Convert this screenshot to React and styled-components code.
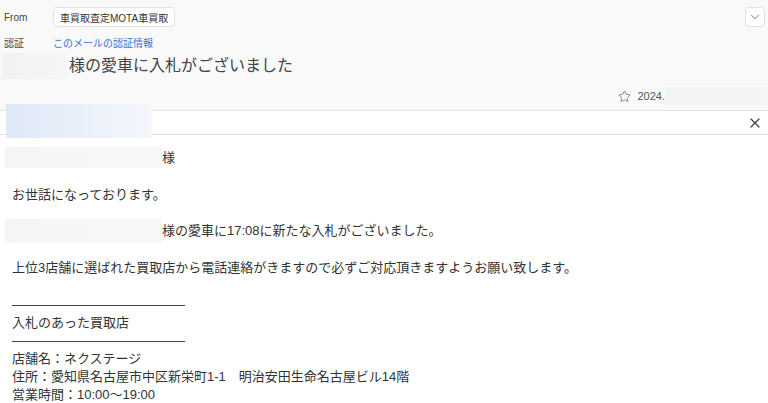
import React from "react";
import styled, { createGlobalStyle } from "styled-components";
import { Star, X, ChevronDown } from "lucide-react";

const Global = createGlobalStyle`
  html, body { margin: 0; padding: 0; background: #fff; }
  body {
    font-family: "Liberation Sans", Arial, "Noto Sans CJK JP", sans-serif;
    color: #333;
    width: 768px;
    height: 403px;
    overflow: hidden;
  }
`;

const Header = styled.header`
  background: #f9f9fa;
  border-bottom: 1px solid #e3e3e5;
  height: 111px;
  box-sizing: border-box;
  padding: 7px 3px 0 4px;
`;

const MetaRow = styled.div`
  display: flex;
  align-items: center;
  height: ${(p) => p.$h || 18}px;
  margin-bottom: ${(p) => p.$mb || 0}px;
  font-size: 10px;
  color: #444;
`;

const Label = styled.span`
  width: 49px;
  flex: none;
`;

const Chip = styled.span`
  display: inline-flex;
  align-items: center;
  height: 20px;
  box-sizing: border-box;
  padding: 0 6px;
  background: #fff;
  border: 1px solid #e2e2e4;
  border-radius: 4px;
  color: #333;
  font-size: 10px;
`;

const Link = styled.a`
  color: #3a74cf;
  text-decoration: none;
`;

const Spacer = styled.div`
  flex: 1;
`;

const IconButton = styled.button`
  width: 20px;
  height: 20px;
  padding: 0;
  display: flex;
  align-items: center;
  justify-content: center;
  background: #fff;
  border: 1px solid #e2e2e4;
  border-radius: 4px;
  color: #666;
`;

const SubjectRow = styled.div`
  display: flex;
  align-items: center;
  margin: 2px 0 0 -2px;
  height: 26px;
`;

const Redact = styled.span`
  display: inline-block;
  flex: none;
  width: ${(p) => p.$w}px;
  height: ${(p) => p.$h}px;
  background: ${(p) => p.$bg || "linear-gradient(90deg, #f1f1f3, #f6f6f7)"};
`;

const Subject = styled.h1`
  margin: 0 0 0 1px;
  font-size: 16px;
  font-weight: 400;
  color: #444;
  line-height: 26px;
`;

const DateRow = styled.div`
  display: flex;
  align-items: center;
  justify-content: flex-end;
  margin: 7px -3px 0 0;
  height: 20px;
  font-size: 11px;
  color: #555;
  gap: 6px;
`;

const DateText = styled.span`
  display: flex;
  align-items: center;
`;

const TabRow = styled.div`
  position: relative;
  height: 23px;
  border-bottom: 1px solid #e3e3e5;
  display: flex;
  align-items: center;
  justify-content: flex-end;
  padding-right: 5px;
  color: #444;
`;

const TabRedact = styled.span`
  position: absolute;
  left: 6px;
  top: -7px;
  width: 146px;
  height: 34px;
  background: linear-gradient(90deg, #dfe8f8, #eef3fb 70%, #f4f7fc);
`;

const Body = styled.main`
  padding: 13px 0 0 12px;
  font-size: 13px;
  line-height: 19px;
  color: #333;
`;

const Para = styled.p`
  margin: 0 0 17.5px;
  display: flex;
  align-items: center;
  height: 19px;
  white-space: nowrap;
`;

const NameRedact = styled(Redact)`
  margin: -3px 0 -3px -7px;
  background: linear-gradient(90deg, #f5f5f6, #f8f8f9);
`;

const Signature = styled.div`
  margin-top: 28px;
  line-height: 18px;
`;

const Rule = styled.div`
  width: 173px;
  height: 1px;
  background: #444;
  margin: 8.5px 0;
`;

const Line = styled.div`
  white-space: nowrap;
`;

export default function App() {
  return (
    <>
      <Global />
      <Header>
        <MetaRow $h={20} $mb={6}>
          <Label>From</Label>
          <Chip>車買取査定MOTA車買取</Chip>
          <Spacer />
          <IconButton>
            <ChevronDown size={14} strokeWidth={1.5} />
          </IconButton>
        </MetaRow>
        <MetaRow>
          <Label>認証</Label>
          <Link href="#">このメールの認証情報</Link>
        </MetaRow>
        <SubjectRow>
          <Redact $w={66} $h={26} />
          <Subject>様の愛車に入札がございました</Subject>
        </SubjectRow>
        <DateRow>
          <Star size={13} strokeWidth={1.4} color="#666" />
          <DateText>
            2024.
            <Redact $w={103} $h={18} $bg="linear-gradient(90deg, #f3f3f4, #f5f5f6)" />
          </DateText>
        </DateRow>
      </Header>
      <TabRow>
        <TabRedact />
        <X size={16} strokeWidth={1.8} />
      </TabRow>
      <Body>
        <Para>
          <NameRedact $w={157} $h={21} />
          様
        </Para>
        <Para>お世話になっております。</Para>
        <Para>
          <NameRedact $w={157} $h={24} />
          様の愛車に17:08に新たな入札がございました。
        </Para>
        <Para>上位3店舗に選ばれた買取店から電話連絡がきますので必ずご対応頂きますようお願い致します。</Para>
        <Signature>
          <Rule />
          <Line>入札のあった買取店</Line>
          <Rule />
          <Line>店舗名：ネクステージ</Line>
          <Line>住所：愛知県名古屋市中区新栄町1-1　明治安田生命名古屋ビル14階</Line>
          <Line>営業時間：10:00〜19:00</Line>
        </Signature>
      </Body>
    </>
  );
}
